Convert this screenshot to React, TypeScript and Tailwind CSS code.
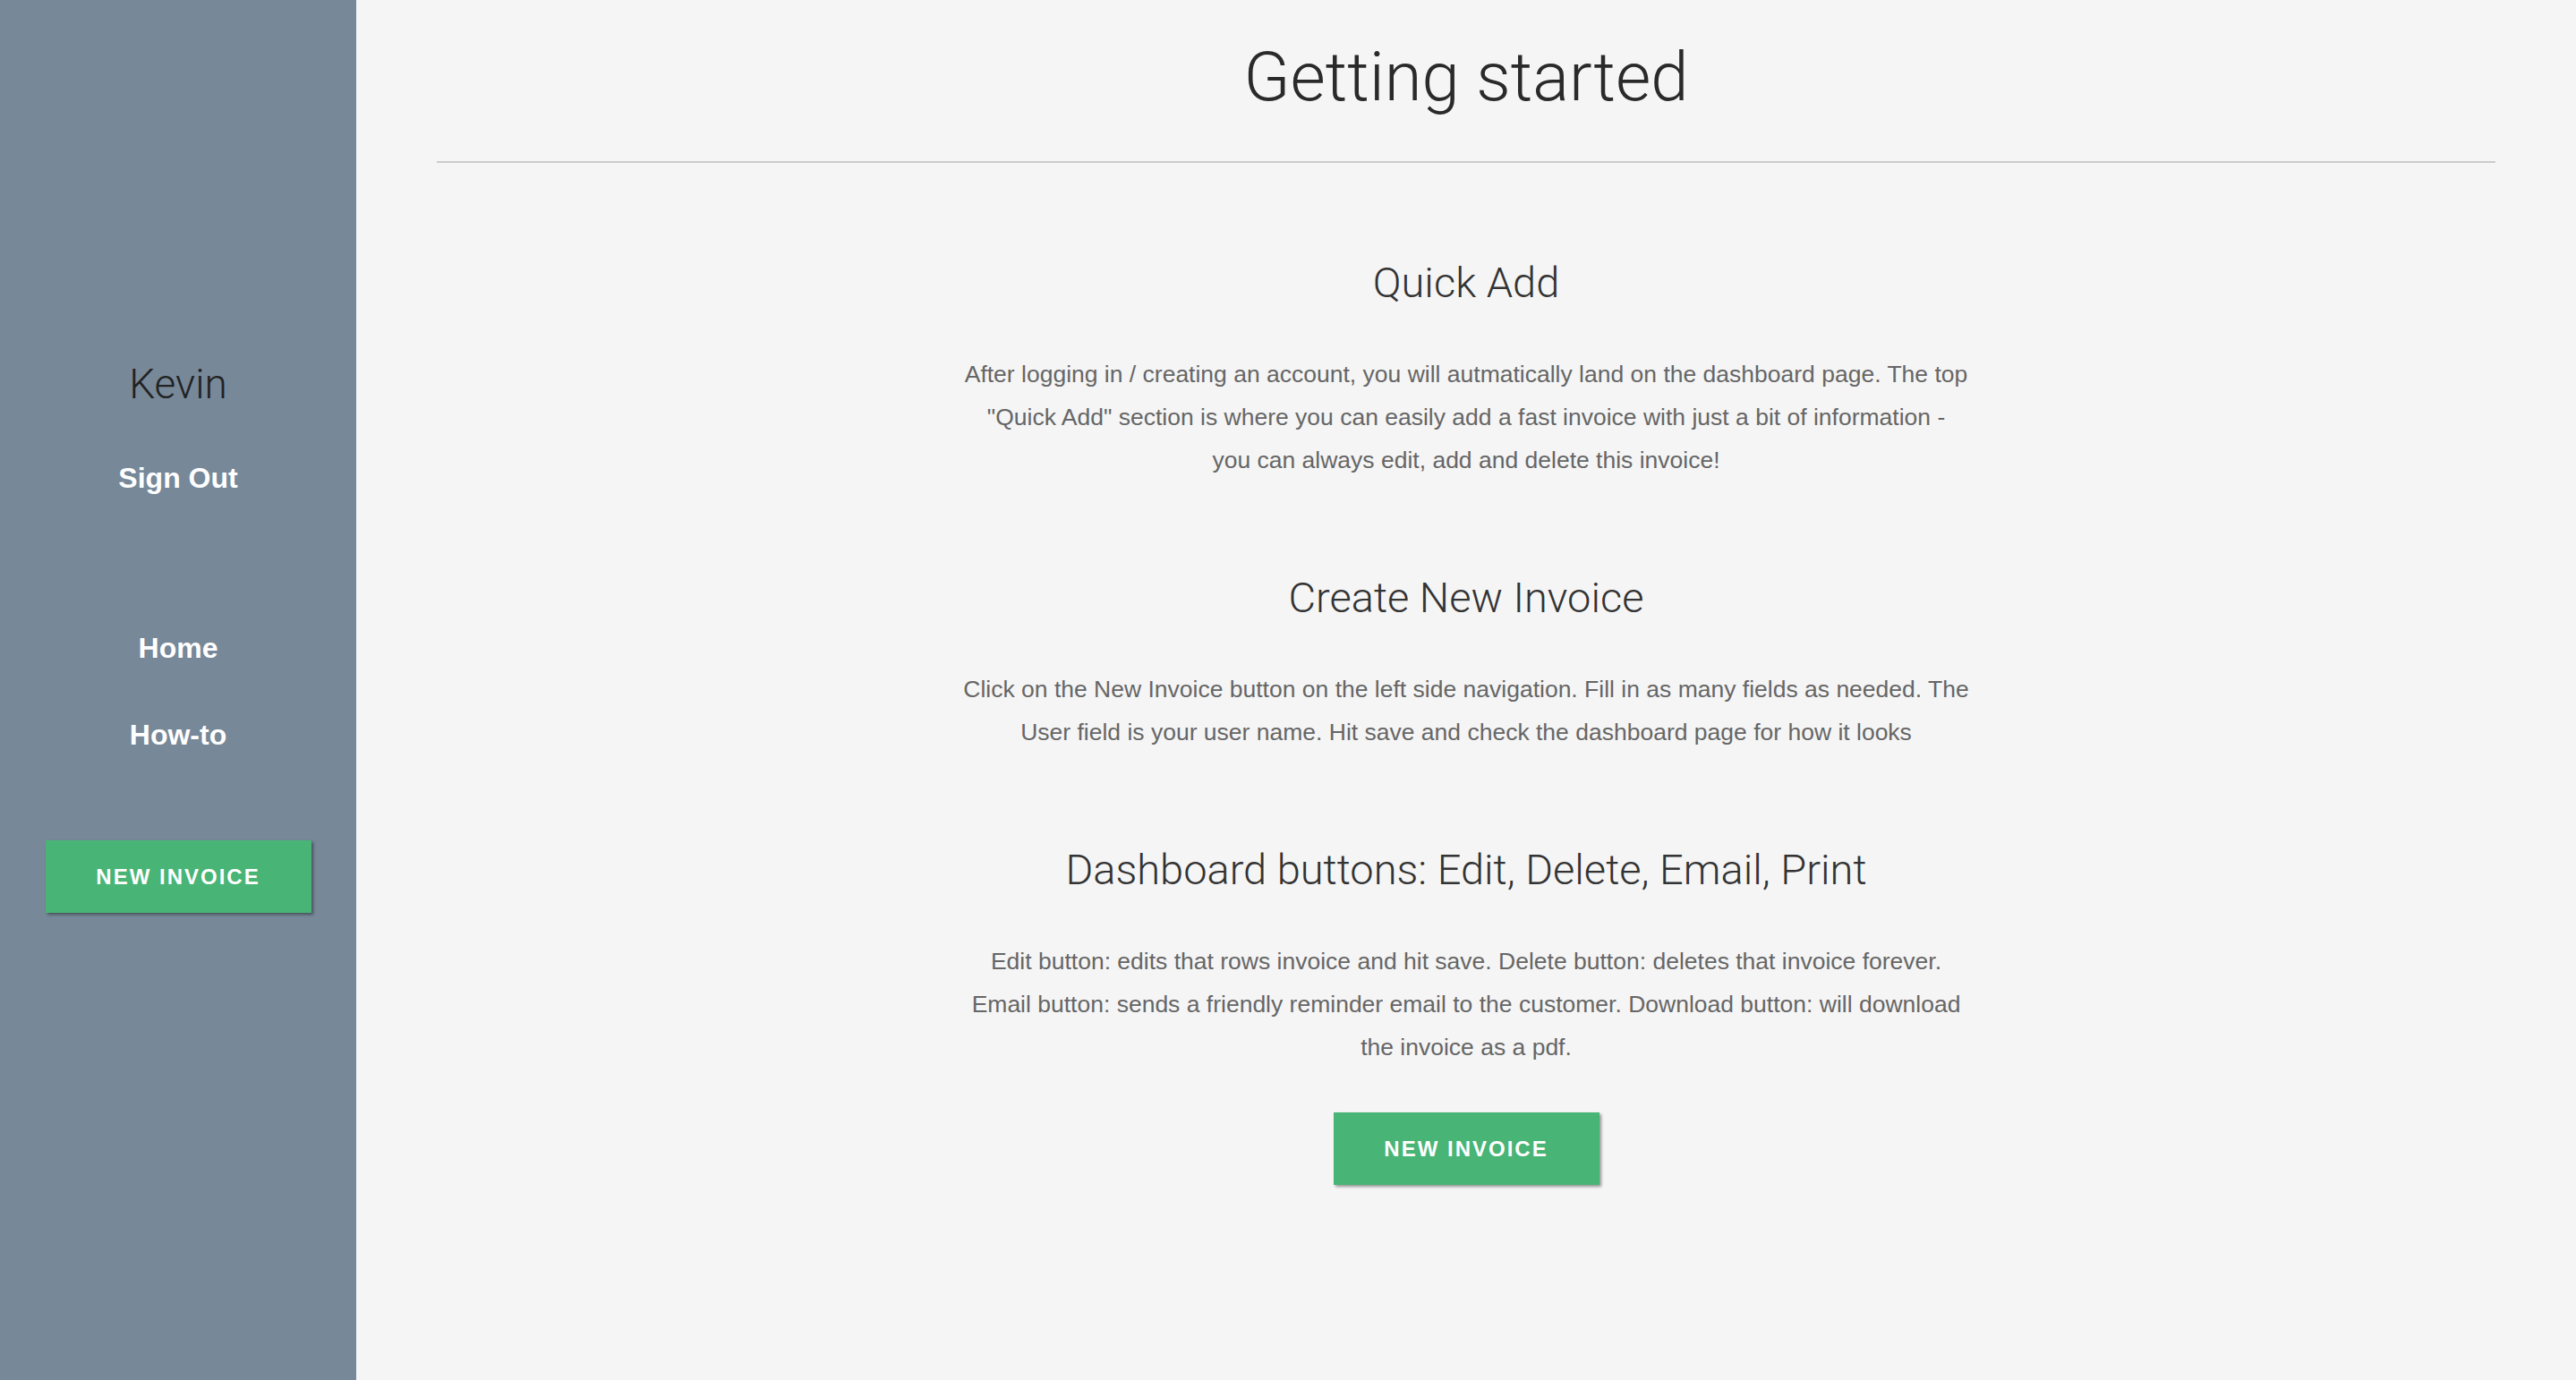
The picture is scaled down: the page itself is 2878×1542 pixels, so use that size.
import { useState } from 'react'

// line breaks kept as they fall in the design
const sections = [
  {
    title: 'Quick Add',
    lines: [
      'After logging in / creating an account, you will autmatically land on the dashboard page. The top',
      '"Quick Add" section is where you can easily add a fast invoice with just a bit of information -',
      'you can always edit, add and delete this invoice!',
    ],
  },
  {
    title: 'Create New Invoice',
    lines: [
      'Click on the New Invoice button on the left side navigation. Fill in as many fields as needed. The',
      'User field is your user name. Hit save and check the dashboard page for how it looks',
    ],
  },
  {
    title: 'Dashboard buttons: Edit, Delete, Email, Print',
    lines: [
      'Edit button: edits that rows invoice and hit save. Delete button: deletes that invoice forever.',
      'Email button: sends a friendly reminder email to the customer. Download button: will download',
      'the invoice as a pdf.',
    ],
  },
]

function NewInvoiceButton() {
  return (
    <button className="h-[81px] w-[297px] bg-[#48b475] text-[24px] font-bold tracking-[2px] text-white shadow-[2px_2px_3px_rgba(0,0,0,0.4)]">
      NEW INVOICE
    </button>
  )
}

export default function App() {
  const [user] = useState('Kevin')

  return (
    <div className="flex h-[1542px] w-full font-['Liberation_Sans',Arial,sans-serif]">
      <aside className="flex w-[398px] shrink-0 flex-col items-center bg-[#778899] pt-[406px]">
        <div className="font-['Roboto',sans-serif] text-[46px] font-light leading-none text-[#222]">{user}</div>
        <a className="mt-[58px] text-[32px] font-bold text-white">Sign Out</a>
        <nav className="mt-[150px] flex flex-col items-center gap-[65px]">
          <a className="text-[32px] font-bold leading-none text-white">Home</a>
          <a className="text-[32px] font-bold leading-none text-white">How-to</a>
        </nav>
        <div className="mt-[102px]">
          <NewInvoiceButton />
        </div>
      </aside>

      <main className="flex-1 bg-[#f5f5f5] px-[90px]">
        <h1 className="pt-[48px] pb-[56px] text-center font-['Roboto',sans-serif] text-[76px] font-light leading-none text-[#2a2a2a]">
          Getting started
        </h1>
        <hr className="border-t-2 border-[#cccccc]" />

        <div className="mx-auto flex max-w-[1180px] flex-col items-center pt-[110px] text-center">
          {sections.map((s, i) => (
            <section key={i} className={`flex flex-col items-center ${i > 0 ? 'mt-[106px]' : ''}`}>
              <h2 className="font-['Roboto',sans-serif] text-[47px] font-light leading-none text-[#333]">{s.title}</h2>
              <p className="mt-[55px] text-[26.5px] leading-[48px] text-[#666]">
                {s.lines.map((l, j) => (
                  <span key={j} className="block">{l}</span>
                ))}
              </p>
            </section>
          ))}
          <div className="mt-[49px]">
            <NewInvoiceButton />
          </div>
        </div>
      </main>
    </div>
  )
}
